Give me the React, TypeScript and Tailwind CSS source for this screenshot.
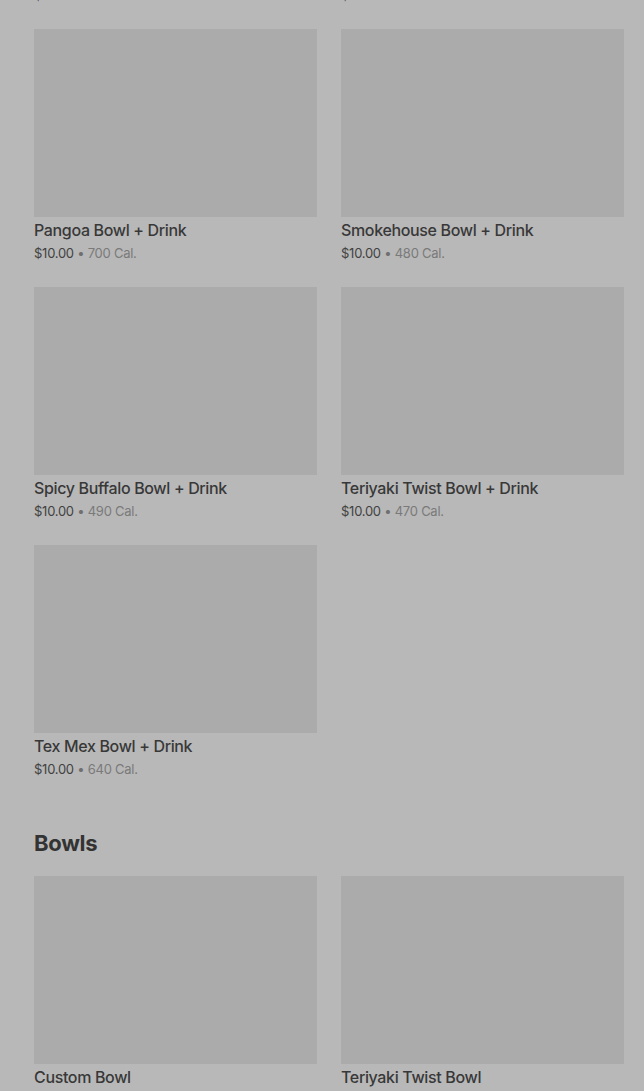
import React from "react";

interface Item {
  name: string;
  cal: number;
}

const prevRow: Item[] = [
  { name: "Harvest Bowl + Drink", cal: 620 },
  { name: "Garden Bowl + Drink", cal: 560 },
];

const bowlDrinks: Item[] = [
  { name: "Pangoa Bowl + Drink", cal: 700 },
  { name: "Smokehouse Bowl + Drink", cal: 480 },
  { name: "Spicy Buffalo Bowl + Drink", cal: 490 },
  { name: "Teriyaki Twist Bowl + Drink", cal: 470 },
  { name: "Tex Mex Bowl + Drink", cal: 640 },
];

const bowls: Item[] = [
  { name: "Custom Bowl", cal: 0 },
  { name: "Teriyaki Twist Bowl", cal: 410 },
];

const MenuCard = ({ item }: { item: Item }) => (
  <div className="flex flex-col">
    <div className="h-[188px] bg-[#ababab]"></div>
    <p className="pt-[1px] text-[16px] leading-[24px] font-medium text-[#383838] tracking-[-0.35px]">
      {item.name}
    </p>
    <p className="mt-[1px] text-[13px] leading-[20px] tracking-[-0.25px]">
      <span className="text-[#424242]">$10.00</span>
      <span className="text-[#6f6f6f]"> • </span>
      <span className="text-[#7a7a7a]">{item.cal} Cal.</span>
    </p>
  </div>
);

export default function App() {
  return (
    <div
      className="h-[1091px] overflow-hidden bg-[#b8b8b8] pl-[34px] pr-[20px]"
      style={{ fontFamily: "Inter, 'Noto Sans', sans-serif" }}
    >
      <div className="mt-[-229px] grid grid-cols-2 gap-x-[24px] gap-y-[24px]">
        {prevRow.map((it) => (
          <MenuCard key={it.name} item={it} />
        ))}
        {bowlDrinks.map((it) => (
          <MenuCard key={it.name} item={it} />
        ))}
      </div>
      <h2 className="mt-[48px] text-[22px] leading-[32px] font-bold text-[#333333] tracking-[-0.3px]">
        Bowls
      </h2>
      <div className="mt-[17px] grid grid-cols-2 gap-x-[24px] gap-y-[24px]">
        {bowls.map((it) => (
          <MenuCard key={it.name} item={it} />
        ))}
      </div>
    </div>
  );
}
